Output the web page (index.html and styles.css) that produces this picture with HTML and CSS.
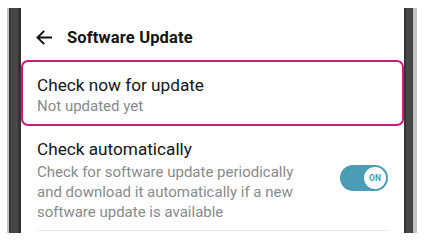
FILE: index.html
```html
<!DOCTYPE html>
<html lang="en">
<head>
  <meta charset="UTF-8">
  <meta name="viewport" content="width=device-width, initial-scale=1.0">
  <title>Software Update</title>
  <link rel="stylesheet" href="styles.css">
</head>
<body>
  <div class="phone">
    <div class="bezel left"></div>
    <div class="screen">
      <header class="topbar">
        <svg class="back" width="17" height="15" viewBox="0 0 17 15" aria-hidden="true">
          <path d="M16 7.5H2.5M8.5 1.5L2.5 7.5l6 6" fill="none" stroke="#111" stroke-width="1.9" stroke-linecap="square"/>
        </svg>
        <h1>Software Update</h1>
      </header>

      <div class="item highlight">
        <div class="item-title">Check now for update</div>
        <div class="item-sub">Not updated yet</div>
      </div>

      <div class="item row">
        <div class="item-text">
          <div class="item-title">Check automatically</div>
          <div class="item-sub">Check for software update periodically<br>and download it automatically if a new<br>software update is available</div>
        </div>
        <div class="toggle on">
          <span class="knob">ON</span>
        </div>
      </div>
    </div>
    <div class="bezel right"></div>
  </div>
</body>
</html>
```

FILE: styles.css
```css
:root {
  --pink: #cc1b7c;
  --teal: #4b9db5;
  --text: #141414;
  --muted: #8a8a8a;
  --line: #ececec;
}

body {
  margin: 0;
  background: #fff;
  font-family: Roboto, "Noto Sans", sans-serif;
  color: var(--text);
}

.phone {
  display: flex;
  width: 410px;
  height: 225px;
  margin: 8px 0 0 7px;
}

.bezel {
  flex: none;
  height: 100%;
}

.bezel.left {
  width: 14px;
  background: linear-gradient(to right, #c4c4c4 0 2px, #3a3a3a 2px 4px, #474747 4px 11px, #333 11px);
}

.bezel.right {
  width: 13px;
  background: linear-gradient(to right, #333 0 2px, #474747 2px 8px, #3a3a3a 8px 9px, #c4c4c4 9px);
}

.screen {
  flex: 1;
  min-width: 0;
  background: #fff;
}

.topbar {
  display: flex;
  align-items: center;
  gap: 15px;
  height: 52px;
  padding: 6px 0 0 14px;
  box-sizing: border-box;
}

.topbar h1 {
  margin: 0;
  font-size: 16.5px;
  font-weight: 700;
  letter-spacing: 0.15px;
}

.item {
  padding: 0 16px;
}

.item-title {
  font-size: 17.2px;
  line-height: 22px;
}

.item-sub {
  font-size: 15px;
  line-height: 20px;
  color: var(--muted);
}

.highlight {
  border: 2px solid var(--pink);
  border-radius: 7px;
  padding: 12px 14px 8px;
}

.row {
  display: flex;
  align-items: center;
  justify-content: space-between;
  margin: 12px 16px 0;
  padding: 0 0 8px;
  border-bottom: 1px solid var(--line);
}

.row .item-sub {
  margin-top: 2px;
}

.toggle {
  flex: none;
  position: relative;
  width: 48px;
  height: 26px;
  border-radius: 13px;
  background: var(--teal);
  margin-bottom: 4px;
}

.knob {
  position: absolute;
  right: 2px;
  top: 2px;
  width: 22px;
  height: 22px;
  border-radius: 50%;
  background: #fff;
  color: var(--teal);
  font-size: 8.5px;
  font-weight: 700;
  line-height: 22px;
  text-align: center;
}
```
